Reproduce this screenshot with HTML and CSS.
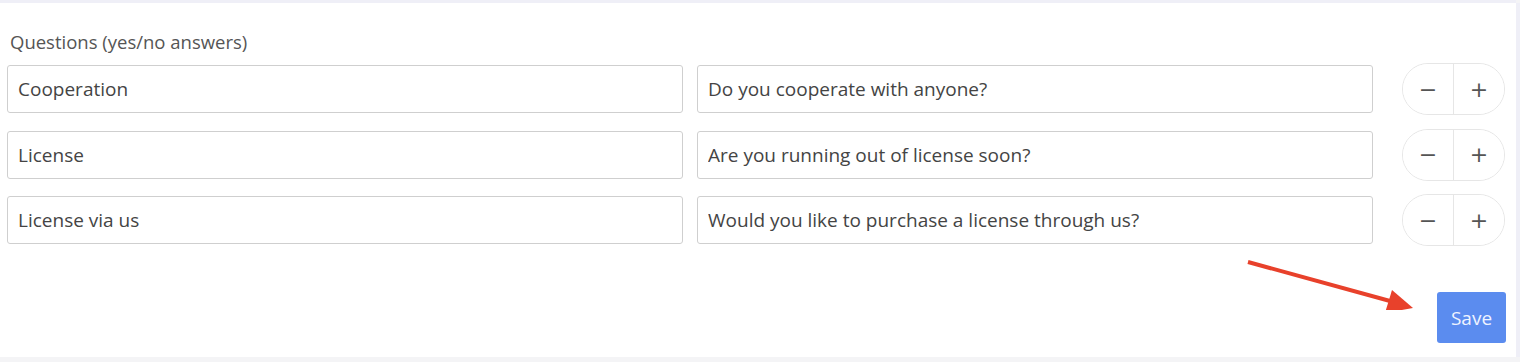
FILE: index.html
```html
<!DOCTYPE html>
<html lang="en">
<head>
    <meta charset="UTF-8">
    <title>Questions</title>
    <link rel="stylesheet" href="styles.css">
</head>
<body>
    <div class="panel">
        <label class="field-label">Questions (yes/no answers)</label>

        <div class="question-row">
            <input class="text-input" type="text" value="Cooperation">
            <input class="text-input" type="text" value="Do you cooperate with anyone?">
            <div class="step-group">
                <button class="step-button">&minus;</button>
                <button class="step-button">+</button>
            </div>
        </div>

        <div class="question-row">
            <input class="text-input" type="text" value="License">
            <input class="text-input" type="text" value="Are you running out of license soon?">
            <div class="step-group">
                <button class="step-button">&minus;</button>
                <button class="step-button">+</button>
            </div>
        </div>

        <div class="question-row">
            <input class="text-input" type="text" value="License via us">
            <input class="text-input" type="text" value="Would you like to purchase a license through us?">
            <div class="step-group">
                <button class="step-button">&minus;</button>
                <button class="step-button">+</button>
            </div>
        </div>

        <div class="actions">
            <button class="save-button">Save</button>
        </div>

        <svg class="arrow" width="200" height="70" viewBox="0 0 200 70">
            <line x1="8" y1="22" x2="150" y2="61" stroke="#e8412b" stroke-width="4"/>
            <polygon points="173,68 152,50 145,73" fill="#e8412b"/>
        </svg>
    </div>
</body>
</html>
```

FILE: styles.css
```css
body {
    margin: 0;
    background: #f4f4f6;
    font-family: "Open Sans", "Lato", sans-serif;
    color: #444;
}
.panel {
    position: relative;
    width: 1516px;
    height: 354px;
    margin-top: 3px;
    box-sizing: border-box;
    padding: 26px 10px 0 7px;
    background: #fff;
    box-shadow: 0 -3px 0 #efeff7, 4px 0 0 #efeff7;
}
.field-label {
    display: block;
    margin: 0 0 9px 3px;
    font-size: 18.5px;
    line-height: 25px;
    color: #555;
}
.question-row {
    display: grid;
    grid-template-columns: 676px 676px 103px;
    column-gap: 14px;
    align-items: center;
    height: 52px;
    margin-bottom: 13.5px;
}
.question-row .step-group {
    margin-left: 15px;
}
.text-input {
    height: 48px;
    box-sizing: border-box;
    padding: 0 10px;
    border: 1px solid #cfcfcf;
    border-radius: 3px;
    font-family: inherit;
    font-size: 19px;
    color: #444;
    outline: none;
}
.step-group {
    display: flex;
    width: 103px;
    height: 52px;
    box-sizing: border-box;
    border: 1px solid #e6e6e6;
    border-radius: 26px;
    overflow: hidden;
}
.step-button {
    flex: 1;
    border: none;
    background: #fff;
    font-family: "DejaVu Sans", sans-serif;
    font-size: 22px;
    color: #555;
    padding: 0;
}
.step-button + .step-button {
    border-left: 1px solid #e6e6e6;
}
.actions {
    display: flex;
    justify-content: flex-end;
    margin-top: 46px;
}
.save-button {
    width: 69px;
    height: 51px;
    border: none;
    border-radius: 3px;
    background: #5b8cef;
    color: #eef3ff;
    font-family: inherit;
    font-size: 19px;
}
.arrow {
    position: absolute;
    left: 1240px;
    top: 237px;
}
```
